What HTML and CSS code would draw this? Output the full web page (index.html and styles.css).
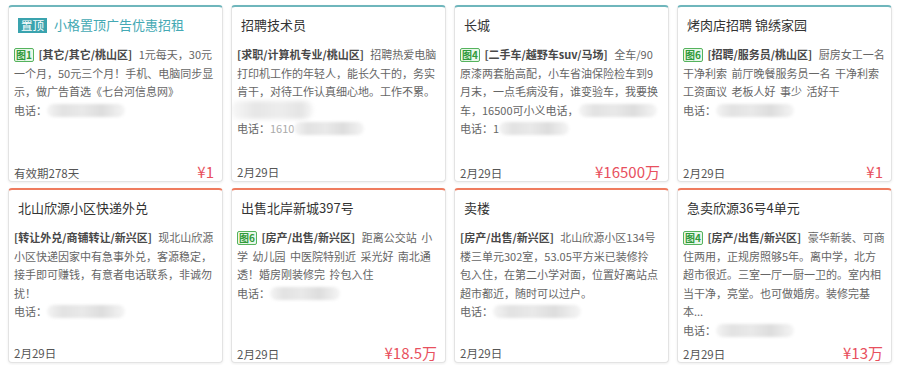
FILE: index.html
```html
<!DOCTYPE html>
<html lang="zh-CN">
<head>
<meta charset="utf-8">
<title>信息列表</title>
<link rel="stylesheet" href="styles.css">
</head>
<body>
<div class="grid">
  <div class="card top-teal">
    <div class="title"><span class="pin">置顶</span><span class="pin-title">小格置顶广告优惠招租</span></div>
    <div class="body"><span class="pic">图1</span> <b>[其它/其它/桃山区]</b> 1元每天，30元<br>一个月，50元三个月！手机、电脑同步显<br>示，做广告首选《七台河信息网》<br>电话：<span class="blur w78"></span></div>
    <div class="foot"><span class="date">有效期278天</span><span class="price">¥1</span></div>
  </div>
  <div class="card top-teal">
    <div class="title">招聘技术员</div>
    <div class="body"><b>[求职/计算机专业/桃山区]</b> 招聘热爱电脑<br>打印机工作的年轻人，能长久干的，务实<br>肯干，对待工作认真细心地。工作不累。<br><span class="blob"></span><br>电话：<span class="fade">1610</span><span class="blur w70"></span></div>
    <div class="foot"><span class="date">2月29日</span></div>
  </div>
  <div class="card top-teal">
    <div class="title">长城</div>
    <div class="body"><span class="pic">图4</span> <b>[二手车/越野车suv/马场]</b> 全车/90<br>原漆两套胎高配，小车省油保险检车到9<br>月末，一点毛病没有，谁变验车，我要换<br>车，16500可小义电话，<span class="blur w78"></span><br>电话：1<span class="blur w70"></span></div>
    <div class="foot"><span class="date">2月29日</span><span class="price">¥16500万</span></div>
  </div>
  <div class="card top-teal">
    <div class="title">烤肉店招聘 锦绣家园</div>
    <div class="body"><span class="pic">图6</span> <b>[招聘/服务员/桃山区]</b> 厨房女工一名<br>干净利索 前厅晚餐服务员一名 干净利索<br>工资面议 老板人好 事少 活好干<br>电话：<span class="blur w78"></span></div>
    <div class="foot"><span class="date">2月29日</span><span class="price">¥1</span></div>
  </div>
  <div class="card top-red">
    <div class="title">北山欣源小区快递外兑</div>
    <div class="body"><b>[转让外兑/商铺转让/新兴区]</b> 现北山欣源<br>小区快递因家中有急事外兑，客源稳定，<br>接手即可赚钱，有意者电话联系，非诚勿<br>扰！<br>电话：<span class="blur w78"></span></div>
    <div class="foot"><span class="date">2月29日</span></div>
  </div>
  <div class="card top-red">
    <div class="title">出售北岸新城397号</div>
    <div class="body"><span class="pic">图6</span> <b>[房产/出售/新兴区]</b> 距离公交站 小<br>学 幼儿园 中医院特别近 采光好 南北通<br>透！婚房刚装修完 拎包入住<br>电话：<span class="blur w70"></span></div>
    <div class="foot"><span class="date">2月29日</span><span class="price">¥18.5万</span></div>
  </div>
  <div class="card top-red">
    <div class="title">卖楼</div>
    <div class="body"><b>[房产/出售/新兴区]</b> 北山欣源小区134号<br>楼三单元302室，53.05平方米已装修拎<br>包入住，在第二小学对面，位置好离站点<br>超市都近，随时可以过户。<br>电话：<span class="blur w88"></span></div>
    <div class="foot"><span class="date">2月29日</span></div>
  </div>
  <div class="card top-red">
    <div class="title">急卖欣源36号4单元</div>
    <div class="body"><span class="pic">图4</span> <b>[房产/出售/新兴区]</b> 豪华新装、可商<br>住两用，正规房照够5年。离中学，北方<br>超市很近。三室一厅一厨一卫的。室内相<br>当干净，亮堂。也可做婚房。装修完基<br>本...<br>电话：<span class="blur w78"></span></div>
    <div class="foot"><span class="date">2月29日</span><span class="price">¥13万</span></div>
  </div>
</div>
</body>
</html>
```

FILE: styles.css
```css
* { box-sizing: border-box; }
html, body { margin: 0; padding: 0; background: #fff; }
body {
  font-family: "Noto Sans CJK SC", "Noto Sans", sans-serif;
  color: #333;
}
.grid {
  display: grid;
  grid-template-columns: repeat(4, 1fr);
  grid-auto-rows: 177px;
  column-gap: 8px;
  row-gap: 6px;
  padding: 5px 8px 0 8px;
}
.card {
  background: #fff;
  border: 1px solid #e3e3e3;
  border-radius: 4px;
  box-shadow: 0 1px 3px rgba(0,0,0,0.07);
  display: flex;
  flex-direction: column;
  overflow: hidden;
}
.top-teal { border-top: 2px solid #6fb6bc; }
.top-red { border-top: 2px solid #ef7b5e; }
.grid .card:nth-child(n+5) { height: 175px; }
.title {
  padding: 8px 9px 7px 9px;
  line-height: 20px;
  font-size: 13px;
  color: #333;
  display: flex;
  align-items: center;
  white-space: nowrap;
}
.pin {
  background: #3aa3ae;
  color: #fff;
  font-size: 11.5px;
  line-height: 15px;
  padding: 0 3px;
  margin-right: 7px;
}
.pin-title { color: #44a9b4; font-size: 13px; }
.body {
  flex: 1;
  padding: 3px 5px 0 5px;
  font-size: 11px;
  line-height: 18.6px;
  color: #666;
  white-space: nowrap;
  word-spacing: 2px;
  overflow: hidden;
}
.body b { color: #484848; font-weight: bold; word-spacing: 0; margin-right: 2px; }
.pic {
  display: inline-block;
  font-size: 10px;
  line-height: 12px;
  padding: 0 1px;
  color: #2f9a3a;
  background: #e9f7e9;
  border: 1px solid #55b35d;
  border-radius: 2px;
  vertical-align: 0;
  font-weight: bold;
}
.fade { color: #aaa; }
.blur {
  display: inline-block;
  height: 13px;
  vertical-align: -2px;
  border-radius: 7px;
  background: linear-gradient(90deg, #f4f4f4 0%, #e2e2e2 20%, #e9e9e9 45%, #dddddd 70%, #f5f5f5 100%);
  filter: blur(1.5px);
}
.w70 { width: 70px; }
.w78 { width: 78px; }
.w88 { width: 88px; }
.blob {
  display: inline-block;
  width: 82px;
  height: 18px;
  margin-left: -6px;
  vertical-align: -4px;
  border-radius: 8px;
  background: linear-gradient(90deg, #f8f8f8 0%, #e6e6e6 30%, #ededed 60%, #e4e4e4 85%, #f7f7f7 100%);
  filter: blur(2px);
}
.foot {
  display: flex;
  justify-content: space-between;
  align-items: baseline;
  padding: 0 8px 0 5px;
  height: 18px;
  line-height: 18px;
}
.date { font-size: 11.5px; color: #555; }
.price { font-size: 15px; color: #e8505e; }
```
